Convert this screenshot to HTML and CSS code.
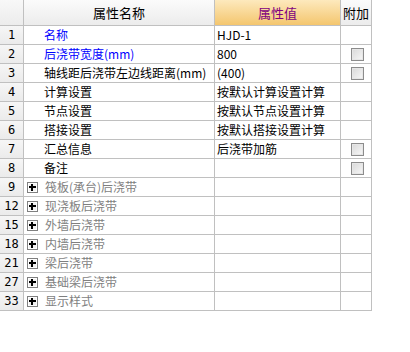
FILE: index.html
```html
<!DOCTYPE html>
<html>
<head>
    <meta charset="utf-8">
    <title>属性编辑</title>
    <link rel="stylesheet" href="styles.css">
</head>
<body>
    <table class="grid">
        <colgroup>
            <col class="c-num">
            <col class="c-name">
            <col class="c-val">
            <col class="c-add">
        </colgroup>
        <thead>
            <tr>
                <th class="h-num"></th>
                <th class="h-name">属性名称</th>
                <th class="h-val">属性值</th>
                <th class="h-add">附加</th>
            </tr>
        </thead>
        <tbody>
            <tr><td class="num">1</td><td class="name blue">名称</td><td class="val">HJD-1</td><td class="add"></td></tr>
            <tr><td class="num">2</td><td class="name blue">后浇带宽度(mm)</td><td class="val">800</td><td class="add"><span class="chk"></span></td></tr>
            <tr><td class="num">3</td><td class="name">轴线距后浇带左边线距离(mm)</td><td class="val">(400)</td><td class="add"><span class="chk"></span></td></tr>
            <tr><td class="num">4</td><td class="name">计算设置</td><td class="val">按默认计算设置计算</td><td class="add"></td></tr>
            <tr><td class="num">5</td><td class="name">节点设置</td><td class="val">按默认节点设置计算</td><td class="add"></td></tr>
            <tr><td class="num">6</td><td class="name">搭接设置</td><td class="val">按默认搭接设置计算</td><td class="add"></td></tr>
            <tr><td class="num">7</td><td class="name">汇总信息</td><td class="val">后浇带加筋</td><td class="add"><span class="chk"></span></td></tr>
            <tr><td class="num">8</td><td class="name">备注</td><td class="val"></td><td class="add"><span class="chk"></span></td></tr>
            <tr><td class="num">9</td><td class="name group"><span class="plus"></span>筏板(承台)后浇带</td><td class="val"></td><td class="add"></td></tr>
            <tr><td class="num">12</td><td class="name group"><span class="plus"></span>现浇板后浇带</td><td class="val"></td><td class="add"></td></tr>
            <tr><td class="num">15</td><td class="name group"><span class="plus"></span>外墙后浇带</td><td class="val"></td><td class="add"></td></tr>
            <tr><td class="num">18</td><td class="name group"><span class="plus"></span>内墙后浇带</td><td class="val"></td><td class="add"></td></tr>
            <tr><td class="num">21</td><td class="name group"><span class="plus"></span>梁后浇带</td><td class="val"></td><td class="add"></td></tr>
            <tr><td class="num">27</td><td class="name group"><span class="plus"></span>基础梁后浇带</td><td class="val"></td><td class="add"></td></tr>
            <tr><td class="num">33</td><td class="name group"><span class="plus"></span>显示样式</td><td class="val"></td><td class="add"></td></tr>
        </tbody>
    </table>
</body>
</html>
```

FILE: styles.css
```css
body {
    margin: 0;
    background: #fff;
    font-family: "Noto Sans CJK SC", "DejaVu Sans", sans-serif;
    font-size: 12px;
    color: #000;
}
.grid {
    border-collapse: separate;
    border-spacing: 0;
    table-layout: fixed;
    width: 372px;
}
.c-num { width: 24px; }
.c-name { width: 191px; }
.c-val { width: 126px; }
.c-add { width: 31px; }
.grid th,
.grid td {
    box-sizing: border-box;
    padding: 0;
    border-right: 1px solid #c0c0c0;
    border-bottom: 1px solid #c0c0c0;
    white-space: nowrap;
    overflow: hidden;
}
.grid th {
    height: 26px;
    font-weight: normal;
    font-size: 13px;
    text-align: center;
    background: linear-gradient(#fbfbfb, #ececec);
}
.grid th.h-num {
    background: linear-gradient(#f8f8f8, #ececec);
}
.grid th.h-val {
    color: #800080;
    background: linear-gradient(#fde9bd, #f4c66e);
}
.grid td {
    height: 19px;
    line-height: 18px;
}
.num {
    text-align: center;
    font-family: "DejaVu Sans Mono", monospace;
    font-size: 12px;
    background: linear-gradient(#f6f6f6, #ebebeb);
}
.name {
    padding-left: 20px !important;
}
.name.group {
    padding-left: 2px !important;
    color: #7f7f7f;
}
.blue {
    color: #0000ff;
}
.val {
    padding-left: 2px !important;
}
.add {
    text-align: center;
}
.plus {
    display: inline-block;
    position: relative;
    box-sizing: border-box;
    width: 11px;
    height: 11px;
    margin: 0 7px 0 1px;
    vertical-align: -1px;
    border: 1px solid #808080;
    background: #f0f0f0;
    box-shadow: inset 0 0 0 1px #fff;
}
.plus::before,
.plus::after {
    content: "";
    position: absolute;
    background: #000;
}
.plus::before {
    left: 1px;
    top: 3px;
    width: 7px;
    height: 2px;
}
.plus::after {
    left: 3px;
    top: 1px;
    width: 2px;
    height: 7px;
}
.chk {
    display: inline-block;
    box-sizing: border-box;
    width: 13px;
    height: 13px;
    margin-left: 2px;
    vertical-align: -2px;
    border: 1px solid #8c8c8c;
    background: linear-gradient(135deg, #d8d8d8, #f8f8f8);
    box-shadow: inset 0 0 0 1px #e6e6e6;
}
```
